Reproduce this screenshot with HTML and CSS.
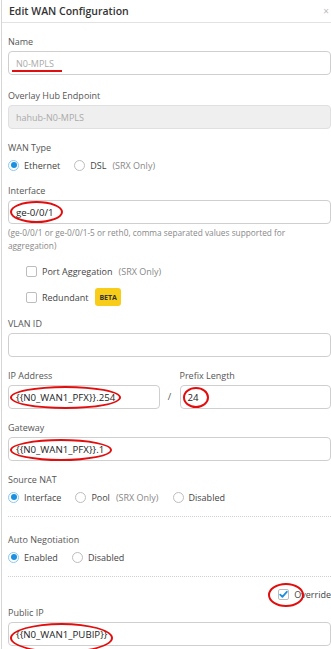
FILE: index.html
```html
<!DOCTYPE html>
<html>
<head>
<meta charset="utf-8">
<link rel="stylesheet" href="styles.css">
</head>
<body>
<div class="panel">
  <div class="header">
    <span class="title">Edit WAN Configuration</span>
    <span class="close">×</span>
  </div>
  <div class="form">
    <div class="field f-name">
      <div class="lbl">Name</div>
      <div class="input"><span class="muted">N0-MPLS</span><span class="underline"></span></div>
    </div>
    <div class="field">
      <div class="lbl">Overlay Hub Endpoint</div>
      <div class="input disabled"><span class="muted">hahub-N0-MPLS</span></div>
    </div>
    <div class="field">
      <div class="lbl">WAN Type</div>
      <div class="radios">
        <span class="opt"><span class="radio on"></span>Ethernet</span>
        <span class="opt"><span class="radio"></span>DSL<span class="note">(SRX Only)</span></span>
      </div>
    </div>
    <div class="field f-iface">
      <div class="lbl">Interface</div>
      <div class="input"><span class="val">ge-0/0/1</span><span class="ring r-iface"></span></div>
      <div class="help">(ge-0/0/1 or ge-0/0/1-5 or reth0, comma separated values supported for aggregation)</div>
    </div>
    <div class="checks">
      <div class="check-row"><span class="box"></span>Port Aggregation<span class="note">(SRX Only)</span></div>
      <div class="check-row"><span class="box"></span>Redundant<span class="badge">BETA</span></div>
    </div>
    <div class="field">
      <div class="lbl">VLAN ID</div>
      <div class="input"></div>
    </div>
    <div class="field">
      <div class="pair">
        <div class="col">
          <div class="lbl">IP Address</div>
          <div class="input"><span class="val">{{N0_WAN1_PFX}}.254</span><span class="ring r-ip"></span></div>
        </div>
        <span class="slash">/</span>
        <div class="col">
          <div class="lbl">Prefix Length</div>
          <div class="input"><span class="val">24</span><span class="ring r-prefix"></span></div>
        </div>
      </div>
    </div>
    <div class="field">
      <div class="lbl">Gateway</div>
      <div class="input"><span class="val">{{N0_WAN1_PFX}}.1</span><span class="ring r-gw"></span></div>
    </div>
    <div class="field">
      <div class="lbl">Source NAT</div>
      <div class="radios">
        <span class="opt"><span class="radio on"></span>Interface</span>
        <span class="opt"><span class="radio"></span>Pool<span class="note">(SRX Only)</span></span>
        <span class="opt"><span class="radio"></span>Disabled</span>
      </div>
    </div>
    <div class="divider"></div>
    <div class="field">
      <div class="lbl">Auto Negotiation</div>
      <div class="radios">
        <span class="opt"><span class="radio on"></span>Enabled</span>
        <span class="opt"><span class="radio"></span>Disabled</span>
      </div>
    </div>
    <div class="divider"></div>
    <div class="override">
      <span class="box checked">
        <svg width="11" height="11" viewBox="0 0 11 11"><path d="M2.2 5.6 L4.4 7.8 L8.8 2.8" fill="none" stroke="#1b8fe0" stroke-width="1.8" stroke-linecap="round" stroke-linejoin="round"/></svg>
        <span class="ring r-ovr"></span>
      </span>
      <span class="ovr-label">Override</span>
    </div>
    <div class="field">
      <div class="lbl">Public IP</div>
      <div class="input"><span class="val">{{N0_WAN1_PUBIP}}</span><span class="ring r-pub"></span></div>
    </div>
  </div>
</div>
</body>
</html>
```

FILE: styles.css
```css
html, body {
  margin: 0;
  padding: 0;
  background: #fff;
}
body {
  font-family: "Open Sans", "Noto Sans", sans-serif;
  color: #333;
  width: 331px;
  height: 649px;
  overflow: hidden;
}
.panel {
  border-left: 1px solid #d6d6d6;
  margin-left: 1px;
  height: 649px;
}
.header {
  height: 22px;
  border-bottom: 1px solid #e2e2e2;
  display: flex;
  align-items: center;
  justify-content: space-between;
  padding-left: 7px;
}
.title {
  font-size: 10.5px;
  font-weight: 600;
  color: #333;
}
.close {
  font-size: 10px;
  color: #bbb;
  margin-right: 2px;
}
.form {
  padding: 12px 0 0 6px;
}
.field {
  margin-bottom: 12px;
}
.f-name {
  margin-bottom: 14px;
}
.lbl {
  font-size: 9px;
  line-height: 14px;
  color: #555;
  margin-bottom: 2px;
  white-space: nowrap;
}
.input {
  position: relative;
  height: 24px;
  box-sizing: border-box;
  border: 1px solid #cfcfcf;
  border-radius: 4px;
  padding: 0 7px;
  display: flex;
  align-items: center;
  font-size: 9px;
}
.input.disabled {
  background: #efefef;
  border-color: #e0e0e0;
}
.muted {
  color: #aaa;
}
.val {
  color: #222;
  font-size: 9.7px;
}
.underline {
  position: absolute;
  left: 3px;
  top: 18px;
  width: 50px;
  height: 2px;
  background: #e01010;
}
.ring {
  position: absolute;
  border: 2px solid #e20e0e;
  border-radius: 50%;
  box-sizing: border-box;
  pointer-events: none;
}
.r-iface { left: 1px; top: 0px; width: 53px; height: 22px; }
.r-ip { left: 1px; top: 0px; width: 111px; height: 23px; }
.r-prefix { left: 2px; top: 1px; width: 26px; height: 21px; }
.r-gw { left: 1px; top: 1px; width: 102px; height: 22px; }
.r-pub { left: 1px; top: 0px; width: 103px; height: 30px; }
.r-ovr { left: -11px; top: -7px; width: 36px; height: 24px; }
.radios {
  display: flex;
  align-items: center;
  height: 14px;
  margin-top: 3px;
  font-size: 9px;
  color: #444;
  gap: 14px;
}
.opt {
  display: flex;
  align-items: center;
  white-space: nowrap;
}
.radio {
  width: 11px;
  height: 11px;
  box-sizing: border-box;
  border: 1px solid #bdbdbd;
  border-radius: 50%;
  margin-right: 5px;
  display: inline-flex;
  align-items: center;
  justify-content: center;
  background: #fff;
}
.radio.on {
  border-color: #8cc8f0;
}
.radio.on::after {
  content: "";
  width: 6px;
  height: 6px;
  border-radius: 50%;
  background: #1b8fe0;
}
.note {
  color: #888;
  margin-left: 6px;
}
.f-iface {
  margin-bottom: 12px;
}
.help {
  margin-top: 2px;
  font-size: 8.3px;
  line-height: 13px;
  color: #888;
  padding-right: 14px;
}
.checks {
  padding-left: 18px;
  display: flex;
  flex-direction: column;
  gap: 12px;
  margin-bottom: 13px;
  font-size: 9px;
  color: #444;
}
.check-row {
  display: flex;
  align-items: center;
  height: 14px;
}
.box {
  position: relative;
  width: 11px;
  height: 11px;
  box-sizing: border-box;
  border: 1px solid #bdbdbd;
  border-radius: 2px;
  margin-right: 5px;
  background: #fff;
  display: inline-flex;
}
.box svg {
  position: absolute;
  left: -1px;
  top: -1px;
}
.badge {
  margin-left: 7px;
  background: #f8cd1a;
  color: #333;
  font-size: 7px;
  font-weight: 700;
  height: 18px;
  padding: 0 4px;
  border-radius: 3px;
  display: inline-flex;
  align-items: center;
}
.pair {
  display: flex;
  align-items: flex-end;
}
.col {
  flex: 1;
  min-width: 0;
}
.slash {
  width: 20px;
  text-align: center;
  font-size: 9.5px;
  color: #555;
  height: 24px;
  line-height: 24px;
}
.divider {
  border-top: 1px dotted #d0d0d0;
  margin: 5px 0 16px;
}
.override {
  display: flex;
  justify-content: flex-end;
  align-items: center;
  height: 14px;
  margin-top: -6px;
  margin-bottom: 5px;
  font-size: 9px;
  color: #444;
}
```
